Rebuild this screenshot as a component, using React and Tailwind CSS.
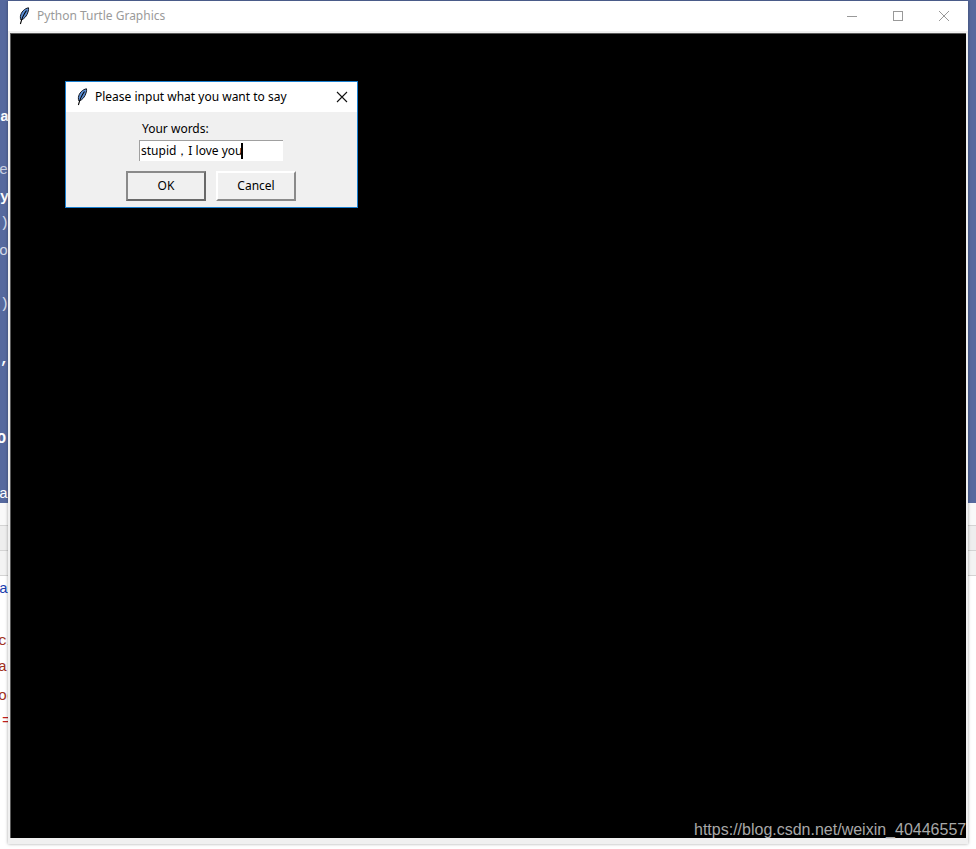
const uiFont = 'font-["Noto_Sans","Open_Sans",sans-serif]';

// bits of the code editor that stick out to the left of the turtle window
const codeBits = [
    { text: 'a', cls: 'top-[109px] left-0 font-bold text-white' },
    { text: 'ex', cls: 'top-[162px] -left-[1px] text-[#c9d0e2]' },
    { text: 'y', cls: 'top-[189px] left-0 font-bold text-white' },
    { text: ')', cls: 'top-[215px] left-0 text-[#d5dbe9]' },
    { text: 'or', cls: 'top-[243px] -left-[1px] text-[#d5dbe9]' },
    { text: ')', cls: 'top-[296px] left-0 text-[#d5dbe9]' },
    { text: ',', cls: 'top-[351px] left-0 font-bold text-white' },
    { text: 'O', cls: 'top-[431px] -left-[3px] font-bold text-white' },
    { text: 'a', cls: 'top-[486px] -left-[1px] text-white' },
    { text: 'ac', cls: 'top-[581px] -left-[1px] text-[#1c3fb0]' },
    { text: 'ci', cls: 'top-[633px] -left-[2px] text-[#a03020]' },
    { text: 'at', cls: 'top-[659px] -left-[2px] text-[#a03020]' },
    { text: 'og', cls: 'top-[688px] -left-[2px] text-[#a03020]' },
    { text: '=', cls: 'top-[713px] left-[2px] text-[#c02020]' },
];

function Feather({ className }) {
    return (
        <svg viewBox="0 0 12 18" className={className}>
            <path d="M10.5 0.8 C6.5 1.5 3 5 2.4 9.5 C2.2 11 2.5 12.2 3 13 C6.5 12 9 8.5 10 5 C10.6 3.2 10.8 1.8 10.5 0.8 Z" fill="#5b8fd6" stroke="#10131c" strokeWidth="1" />
            <path d="M8.5 3.5 C6.2 6.5 4.2 10 2.4 17" fill="none" stroke="#000" strokeWidth="1.1" />
        </svg>
    );
}

function DialogButton({ label, isDefault }) {
    return (
        <div
            className={
                'flex h-[30px] w-[80px] items-center justify-center bg-[#f0f0f0] text-[12px] text-black border-2 ' +
                (isDefault
                    ? 'border-t-[#8a8a8a] border-l-[#8a8a8a] border-r-[#696969] border-b-[#696969]'
                    : 'border-t-white border-l-white border-r-[#8a8a8a] border-b-[#8a8a8a]')
            }
        >
            {label}
        </div>
    );
}

export default function App() {
    return (
        <div className={`relative h-[849px] w-[976px] overflow-hidden bg-white ${uiFont}`}>
            {/* desktop behind the windows */}
            <div className="flex h-full flex-col">
                <div className="h-[503px] bg-[#56699e]" />
                <div className="h-[22px] bg-[#f9f9f9]" />
                <div className="h-[26px] border-y border-[#d4d4d4] bg-[#eeeeee]" />
                <div className="h-[25px] border-b border-[#d4d4d4] bg-[#f3f3f3]" />
                <div className="flex-1 bg-white" />
            </div>
            {codeBits.map((bit) => (
                <span
                    key={bit.top + bit.text + bit.cls}
                    className={`absolute font-["Liberation_Mono",monospace] text-[15px] leading-[18px] ${bit.cls}`}
                >
                    {bit.text}
                </span>
            ))}

            {/* turtle window */}
            <div className="absolute left-[8px] top-[1px] flex h-[843px] w-[960px] flex-col bg-[#f0f0f0] shadow-[0_0_3px_rgba(0,0,0,0.35)]">
                <div className="flex h-[30px] items-center bg-white">
                    <Feather className="ml-[10px] h-[18px] w-[12px]" />
                    <span className="ml-[7px] text-[12px] text-[#9a9a9a]">Python Turtle Graphics</span>
                    <div className="ml-auto flex items-center text-[#8c8c8c]">
                        <svg viewBox="0 0 46 30" className="h-[30px] w-[46px]">
                            <path d="M18 15.5H28" stroke="#999" strokeWidth="1" />
                        </svg>
                        <svg viewBox="0 0 46 30" className="h-[30px] w-[46px]">
                            <rect x="18.5" y="10.5" width="9" height="9" fill="none" stroke="#999" strokeWidth="1" />
                        </svg>
                        <svg viewBox="0 0 46 30" className="mr-[1px] h-[30px] w-[46px]">
                            <path d="M18 10L28 20M28 10L18 20" stroke="#999" strokeWidth="1" />
                        </svg>
                    </div>
                </div>
                <div className="mx-[2px] mb-[6px] mt-[2px] flex-1 border-l border-t border-[#5a5a5a] bg-black" />
            </div>

            {/* input dialog */}
            <div className="absolute left-[65px] top-[81px] flex h-[127px] w-[293px] flex-col border border-[#1a7fd0] bg-[#f0f0f0]">
                <div className="flex h-[30px] items-center bg-white">
                    <Feather className="ml-[10px] h-[18px] w-[12px]" />
                    <span className="ml-[7px] text-[12px] text-black">Please input what you want to say</span>
                    <svg viewBox="0 0 12 12" className="ml-auto mr-[9px] h-[12px] w-[12px]">
                        <path d="M1 1L11 11M11 1L1 11" stroke="#111" strokeWidth="1.1" />
                    </svg>
                </div>
                <div className="pl-[76px] pt-[8px] text-[12px] leading-[17px] text-black">Your words:</div>
                <div className="ml-[73px] mt-[3px] flex h-[21px] w-[144px] items-center border-l border-t border-[#a0a0a0] bg-white pl-[1px] text-[12px] text-black">
                    <span>stupid，I love you</span>
                    <span className="ml-[-1px] h-[16px] w-[2px] bg-black" />
                </div>
                <div className="ml-[60px] mt-[10px] flex gap-[10px]">
                    <DialogButton label="OK" isDefault />
                    <DialogButton label="Cancel" />
                </div>
            </div>

            {/* watermark */}
            <span className='absolute left-[694px] top-[820px] font-["Liberation_Sans",sans-serif] text-[16px] leading-[20px] text-[#a8a8a8]'>
                https://blog.csdn.net/weixin_40446557
            </span>
        </div>
    );
}
